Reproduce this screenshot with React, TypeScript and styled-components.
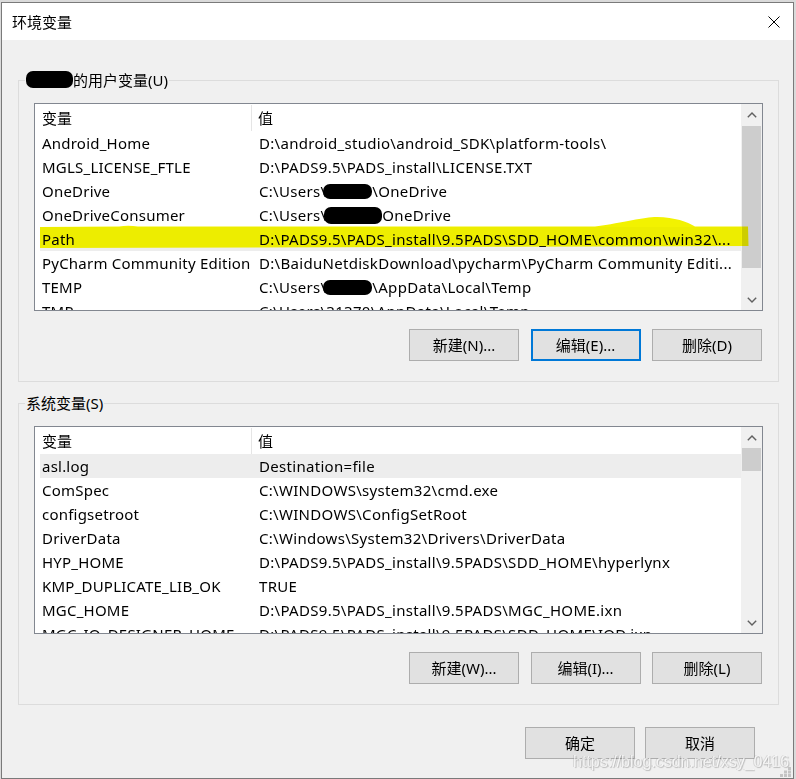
import React from "react";
import styled, { createGlobalStyle, css } from "styled-components";

const GlobalStyle = createGlobalStyle`
  html, body { margin: 0; padding: 0; }
  body {
    background: #dadada;
    font-family: "Noto Sans", "Noto Sans CJK SC", sans-serif;
  }
  #root { width: 796px; height: 779px; overflow: hidden; }
`;

const Window = styled.div`
  position: relative;
  box-sizing: border-box;
  width: 793px;
  height: 777px;
  margin: 2px 0 0 1px;
  border: 1px solid #7a7a7a;
  background: #f0f0f0;
  display: flex;
  flex-direction: column;
  color: #000;
  font-size: 15px;
`;

const TitleBar = styled.div`
  flex: none;
  height: 37px;
  background: #fff;
  display: flex;
  align-items: center;
  justify-content: space-between;
  padding: 0 13px 0 10px;
`;

const Title = styled.span`
  font-size: 15px;
  line-height: 20px;
`;

const Content = styled.div`
  flex: 1;
  display: flex;
  flex-direction: column;
  padding: 40px 14px 0 16px;
`;

const Group = styled.section`
  position: relative;
  border: 1px solid #dcdcdc;
  padding: 22px 15px 20px 15px;
  display: flex;
  flex-direction: column;
  gap: 18px;
  & + & {
    margin-top: 21px;
  }
`;

const GroupLabel = styled.span`
  position: absolute;
  left: 6px;
  top: -11px;
  padding: 0 1px;
  background: #f0f0f0;
  line-height: 20px;
  display: flex;
  align-items: center;
`;

const Redact = styled.span<{ $w: number; $h?: number; $dx?: number }>`
  display: inline-block;
  width: ${(p) => p.$w}px;
  height: ${(p) => p.$h ?? 15}px;
  margin-left: ${(p) => p.$dx ?? 0}px;
  background: #000;
  border-radius: 7px;
  vertical-align: middle;
  position: relative;
  top: -1px;
`;

const ListBox = styled.div`
  position: relative;
  box-sizing: border-box;
  height: 208px;
  border: 1px solid #828790;
  background: #fff;
  display: grid;
  grid-template-columns: 1fr 21px;
`;

const ListBody = styled.div`
  overflow: hidden;
  display: flex;
  flex-direction: column;
`;

const columns = css`
  display: grid;
  grid-template-columns: 212px 1fr;
  margin-left: 5px;
  align-items: center;
  white-space: nowrap;
`;

const HeaderRow = styled.div`
  ${columns};
  flex: none;
  height: 27px;
`;

const HeaderCell = styled.div<{ $first?: boolean }>`
  height: 26px;
  line-height: 26px;
  padding-left: ${(p) => (p.$first ? 2 : 6)}px;
  ${(p) =>
    p.$first &&
    css`
      border-right: 1px solid #e5e5e5;
    `}
`;

const Row = styled.div<{ $selected?: boolean }>`
  ${columns};
  flex: none;
  height: 24px;
  letter-spacing: 0.22px;
  background: ${(p) => (p.$selected ? "#ededed" : "transparent")};
`;

const NameCell = styled.div`
  padding-left: 2px;
  overflow: hidden;
  line-height: 24px;
`;

const ValueCell = styled.div`
  padding-left: 7px;
  overflow: hidden;
  line-height: 24px;
  letter-spacing: 0.3px;
`;

const ScrollBar = styled.div`
  background: #f0f0f0;
  display: flex;
  flex-direction: column;
`;

const ScrollArrow = styled.div`
  flex: none;
  height: 21px;
  display: flex;
  align-items: center;
  justify-content: center;
`;

const ScrollTrack = styled.div`
  flex: 1;
  padding: 0 1px;
`;

const Thumb = styled.div<{ $offset: number; $size: number }>`
  margin-top: ${(p) => p.$offset}px;
  height: ${(p) => p.$size}px;
  background: #cdcdcd;
`;

const Marker = styled.svg`
  position: absolute;
  left: 0;
  top: 0;
  pointer-events: none;
  mix-blend-mode: darken;
`;

const ButtonRow = styled.div<{ $gap?: number; $pad?: number }>`
  display: flex;
  justify-content: flex-end;
  gap: ${(p) => p.$gap ?? 11.5}px;
  padding-right: ${(p) => p.$pad ?? 1}px;
`;

const Footer = styled(ButtonRow)`
  margin-top: 22px;
`;

const Button = styled.button<{ $focused?: boolean }>`
  box-sizing: border-box;
  width: 110px;
  height: 32px;
  padding: 0;
  background: #e1e1e1;
  border: 1px solid #adadad;
  font-family: inherit;
  font-size: 15px;
  color: #000;
  line-height: 20px;
  ${(p) =>
    p.$focused &&
    css`
      border: 2px solid #0078d7;
    `}
`;

const Watermark = styled.span`
  position: absolute;
  left: 571px;
  top: 749px;
  font-family: "Liberation Sans", Arial, sans-serif;
  font-size: 16px;
  line-height: 20px;
  color: rgba(255, 255, 255, 0.72);
  text-shadow: 1px 1px 1px rgba(0, 0, 0, 0.22), -1px 0 0 rgba(140, 140, 140, 0.25);
  white-space: nowrap;
  pointer-events: none;
`;

const Grip = styled.svg`
  position: absolute;
  right: 1px;
  bottom: 1px;
`;

type Entry = { name: string; value: React.ReactNode; selected?: boolean };

const userVars: Entry[] = [
  { name: "Android_Home", value: "D:\\android_studio\\android_SDK\\platform-tools\\" },
  { name: "MGLS_LICENSE_FTLE", value: "D:\\PADS9.5\\PADS_install\\LICENSE.TXT" },
  {
    name: "OneDrive",
    value: (
      <>
        C:\Users\<Redact $w={49} $dx={-3} />\OneDrive
      </>
    ),
  },
  {
    name: "OneDriveConsumer",
    value: (
      <>
        C:\Users\<Redact $w={58} $h={17} $dx={-2} />OneDrive
      </>
    ),
  },
  {
    name: "Path",
    value: "D:\\PADS9.5\\PADS_install\\9.5PADS\\SDD_HOME\\common\\win32\\...",
    selected: true,
  },
  {
    name: "PyCharm Community Edition",
    value: "D:\\BaiduNetdiskDownload\\pycharm\\PyCharm Community Editi...",
  },
  {
    name: "TEMP",
    value: (
      <>
        C:\Users\<Redact $w={49} $dx={-3} />\AppData\Local\Temp
      </>
    ),
  },
  { name: "TMP", value: "C:\\Users\\31370\\AppData\\Local\\Temp" },
];

const systemVars: Entry[] = [
  { name: "asl.log", value: "Destination=file", selected: true },
  { name: "ComSpec", value: "C:\\WINDOWS\\system32\\cmd.exe" },
  { name: "configsetroot", value: "C:\\WINDOWS\\ConfigSetRoot" },
  { name: "DriverData", value: "C:\\Windows\\System32\\Drivers\\DriverData" },
  { name: "HYP_HOME", value: "D:\\PADS9.5\\PADS_install\\9.5PADS\\SDD_HOME\\hyperlynx" },
  { name: "KMP_DUPLICATE_LIB_OK", value: "TRUE" },
  { name: "MGC_HOME", value: "D:\\PADS9.5\\PADS_install\\9.5PADS\\MGC_HOME.ixn" },
  {
    name: "MGC_IO_DESIGNER_HOME",
    value: "D:\\PADS9.5\\PADS_install\\9.5PADS\\SDD_HOME\\IOD.ixn",
  },
];

const Chevron = ({ up }: { up?: boolean }) => (
  <svg width="10" height="6" viewBox="0 0 10 6">
    <polyline
      points={up ? "0.8,5.2 5,1 9.2,5.2" : "0.8,0.8 5,5 9.2,0.8"}
      fill="none"
      stroke="#606060"
      strokeWidth="1.4"
    />
  </svg>
);

const CloseIcon = () => (
  <svg width="12" height="12" viewBox="0 0 12 12">
    <path d="M0.5 0.5 L11.5 11.5 M11.5 0.5 L0.5 11.5" stroke="#000" strokeWidth="1" />
  </svg>
);

type ListProps = {
  entries: Entry[];
  thumbOffset: number;
  thumbSize: number;
  children?: React.ReactNode;
};

const VariableList = ({ entries, thumbOffset, thumbSize, children }: ListProps) => (
  <ListBox>
    <ListBody>
      <HeaderRow>
        <HeaderCell $first>变量</HeaderCell>
        <HeaderCell>值</HeaderCell>
      </HeaderRow>
      {entries.map((e) => (
        <Row key={e.name} $selected={e.selected}>
          <NameCell>{e.name}</NameCell>
          <ValueCell>{e.value}</ValueCell>
        </Row>
      ))}
    </ListBody>
    <ScrollBar>
      <ScrollArrow>
        <Chevron up />
      </ScrollArrow>
      <ScrollTrack>
        <Thumb $offset={thumbOffset} $size={thumbSize} />
      </ScrollTrack>
      <ScrollArrow>
        <Chevron />
      </ScrollArrow>
    </ScrollBar>
    {children}
  </ListBox>
);

export default function App() {
  return (
    <>
      <GlobalStyle />
      <Window>
        <TitleBar>
          <Title>环境变量</Title>
          <CloseIcon />
        </TitleBar>
        <Content>
          <Group>
            <GroupLabel>
              <Redact $w={47} $h={17} />
              的用户变量(U)
            </GroupLabel>
            <VariableList entries={userVars} thumbOffset={1} thumbSize={142}>
              {/* hand-drawn yellow marker over the Path entry */}
              <Marker width="727" height="206" viewBox="0 0 727 206">
                <path
                  d="M5,123 L84,122.5 Q93,121 103,122.5 L560,122.5 C590,118.5 608,113 622,113 C640,113.5 652,117.5 660,122.5 L713,122.5 L713.5,142 L560,142.5 L380,143 L5,144 Z"
                  fill="#f2f200"
                />
              </Marker>
            </VariableList>
            <ButtonRow>
              <Button>新建(N)...</Button>
              <Button $focused>编辑(E)...</Button>
              <Button>删除(D)</Button>
            </ButtonRow>
          </Group>
          <Group>
            <GroupLabel>系统变量(S)</GroupLabel>
            <VariableList entries={systemVars} thumbOffset={0} thumbSize={23} />
            <ButtonRow>
              <Button>新建(W)...</Button>
              <Button>编辑(I)...</Button>
              <Button>删除(L)</Button>
            </ButtonRow>
          </Group>
          <Footer $gap={10} $pad={24}>
            <Button>确定</Button>
            <Button>取消</Button>
          </Footer>
        </Content>
        <Watermark>https://blog.csdn.net/xsy_0416</Watermark>
        <Grip width="12" height="10" viewBox="0 0 12 10">
          <rect x="8" y="0" width="3" height="3" fill="#c4c4c4" />
          <rect x="4" y="3.5" width="3" height="3" fill="#c4c4c4" />
          <rect x="8" y="3.5" width="3" height="3" fill="#c4c4c4" />
          <rect x="0" y="7" width="3" height="3" fill="#c4c4c4" />
          <rect x="4" y="7" width="3" height="3" fill="#c4c4c4" />
          <rect x="8" y="7" width="3" height="3" fill="#c4c4c4" />
        </Grip>
      </Window>
    </>
  );
}
